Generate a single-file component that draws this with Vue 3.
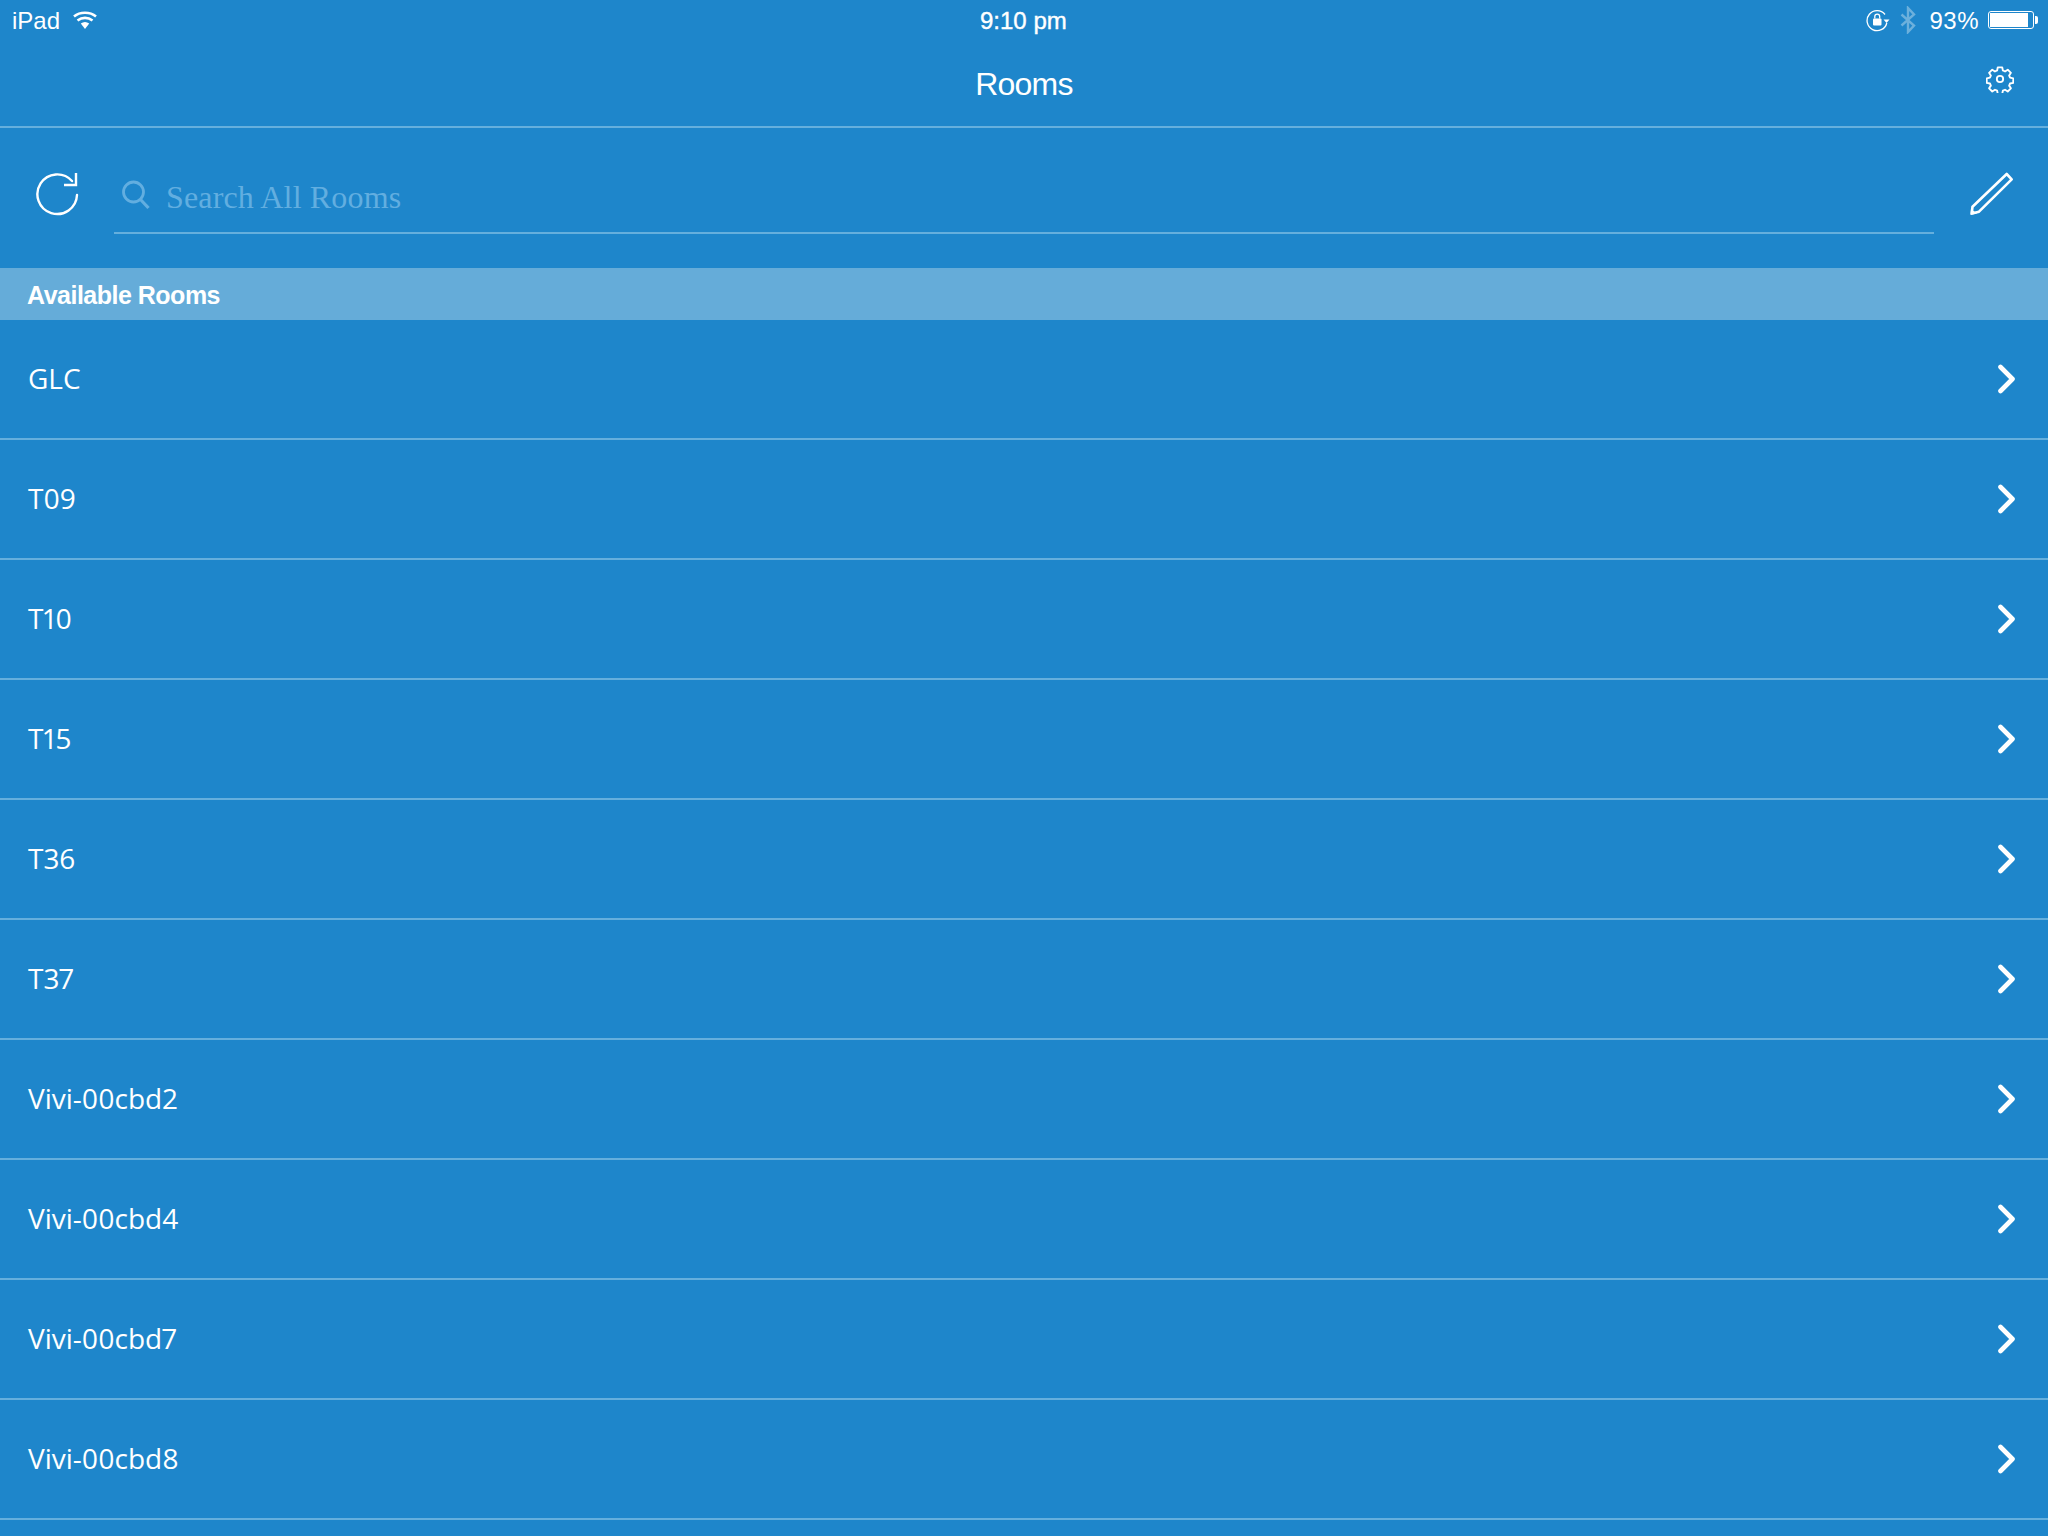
<script setup>
const rooms = ["GLC", "T09", "T10", "T15", "T36", "T37", "Vivi-00cbd2", "Vivi-00cbd4", "Vivi-00cbd7", "Vivi-00cbd8", ""];
</script>

<template>
  <div class="page">
    <!--status bar-->
    <div class="status">
      <div class="status-left">
        <span class="device">iPad</span>
        <svg width="24" height="18" viewBox="0 0 24 18">
          <path d="M1 5.500C7 .5 17 .5 23 5.500" fill="none" stroke="#fff" stroke-width="2.600" />
          <path d="M4.500 9.500C9 6 15 6 19.500 9.500" fill="none" stroke="#fff" stroke-width="2.600" />
          <path d="M7.800 12.500C10.500 10.500 13.500 10.500 16.200 12.500L12 18Z" fill="#fff" />
        </svg>
      </div>
      <div class="clock">9:10 pm</div>
      <div class="status-right">
        <svg width="24" height="24" viewBox="0 0 24 24">
          <path d="M19 6.500A10 10 0 1 0 20.800 15" fill="none" stroke="#fff" stroke-width="1.300" />
          <path d="M17.500 11.500h6l-3 3.500Z" fill="#fff" />
          <rect x="7" y="10.500" width="8.500" height="7" rx="1" fill="#fff" />
          <path d="M8.800 10.500V8.500a2.450 2.450 0 0 1 4.900 0v2" fill="none" stroke="#fff" stroke-width="1.300" />
        </svg>
        <svg class="bt" width="18" height="28" viewBox="0 0 18 28">
          <path d="M2.500 8.500L15 19.500L9 26V2L15 8.500L2.500 19.500" fill="none" stroke="#6cb0dc" stroke-width="2.400" />
        </svg>
        <span class="pct">93%</span>
        <div class="battery"><div class="charge"></div></div>
        <div class="nub"></div>
      </div>
    </div>

    <!--title-->
    <div class="nav">
      <span class="title">Rooms</span>
      <svg class="gear" width="28" height="28" viewBox="0 0 30 30">
        <path d="M12.600 2.500h4.800l.7 3.400 2.300 1 2.900-1.900 3.400 3.400-1.900 2.900 1 2.300 3.400.7v4.800l-3.400.7-1 2.300 1.900 2.900-3.400 3.400-2.900-1.900-2.300 1-.7 3.400h-4.800l-.7-3.400-2.300-1-2.900 1.900-3.400-3.400 1.900-2.900-1-2.300-3.400-.7v-4.800l3.400-.7 1-2.300-1.900-2.900 3.400-3.400 2.900 1.900 2.300-1Z" fill="none" stroke="#fff" stroke-width="2" stroke-linejoin="round" />
        <circle cx="15" cy="15" r="3.400" fill="none" stroke="#fff" stroke-width="2" />
      </svg>
    </div>

    <!--search-->
    <div class="search-row">
      <svg class="refresh" width="44" height="44" viewBox="0 0 44 44">
        <path d="M37 9A19.800 19.800 0 1 0 42 23" fill="none" stroke="#fff" stroke-width="2.400" stroke-linecap="round" />
        <path d="M41 1V13H29" fill="none" stroke="#fff" stroke-width="2.400" />
      </svg>
      <div class="search">
        <svg width="30" height="30" viewBox="0 0 30 30">
          <circle cx="12.500" cy="12" r="10" fill="none" stroke="#62aee0" stroke-width="2.800" />
          <path d="M19.500 19.500L27.500 28" fill="none" stroke="#62aee0" stroke-width="3.200" />
        </svg>
        <span class="placeholder">Search All Rooms</span>
      </div>
      <svg class="pencil" width="44" height="44" viewBox="0 0 44 44">
        <path d="M36.700 2L41.700 7.300L9 39.700L1.700 41.500L2.500 34.700Z" fill="none" stroke="#fff" stroke-width="2.600" stroke-linejoin="round" />
        <path d="M1 37L.5 43L7 41.500Z" fill="#fff" />
      </svg>
    </div>

    <div class="section">Available Rooms</div>

    <!--rooms-->
    <div v-for="room in rooms" :key="room" class="room">
      <span>{{ room }}</span>
      <svg v-if="room" width="18" height="30" viewBox="0 0 18 30">
        <path d="M2.500 3L14.500 15L2.500 27" fill="none" stroke="#fff" stroke-width="4.600" stroke-linecap="round" stroke-linejoin="round" />
      </svg>
    </div>
  </div>
</template>

<style scoped>
.page {
  width: 2048px;
  height: 1536px;
  overflow: hidden;
  background-color: #1e86cb;
  color: #fff;
  font-family: "Liberation Sans", Arial, sans-serif;
}

.status {
  height: 40px;
  display: flex;
  align-items: center;
  justify-content: space-between;
  padding: 0 10px 0 12px;
  font-size: 24px;
  position: relative;
}

.status-left {
  display: flex;
  align-items: center;
  gap: 13px;
}

.device {
  padding-top: 2px;
}

.clock {
  position: absolute;
  left: 980px;
  top: 7px;
  font-size: 24px;
  -webkit-text-stroke: 0.4px #fff;
}

.status-right {
  display: flex;
  align-items: center;
}

.bt {
  margin: 0 12px 0 9px;
}

.pct {
  margin-right: 9px;
  letter-spacing: 0.5px;
  padding-top: 2px;
}

.battery {
  width: 46px;
  height: 18px;
  box-sizing: border-box;
  border: 1px solid #fff;
  border-radius: 3px;
  padding: 1px;
}

.charge {
  width: 38px;
  height: 100%;
  background-color: #fff;
}

.nub {
  width: 3px;
  height: 8px;
  background-color: #fff;
  border-radius: 0 2px 2px 0;
  margin-left: 1px;
}

.nav {
  height: 88px;
  box-sizing: border-box;
  border-bottom: 2px solid #65afdd;
  display: flex;
  align-items: center;
  justify-content: center;
  position: relative;
}

.title {
  font-size: 32px;
  padding-top: 2px;
  letter-spacing: -0.8px;
}

.gear {
  position: absolute;
  right: 34px;
  top: 25px;
}

.search-row {
  height: 140px;
  box-sizing: border-box;
  padding: 38px 34px 34px 35px;
  display: flex;
  align-items: flex-start;
}

.refresh {
  margin-top: 6px;
  margin-right: 35px;
  flex-shrink: 0;
}

.search {
  flex: 1;
  height: 68px;
  box-sizing: border-box;
  border-bottom: 2px solid #65afdd;
  display: flex;
  align-items: flex-start;
  padding: 0 0 0 7px;
  gap: 15px;
}

.search svg {
  margin-top: 14px;
}

.placeholder {
  font-family: "Liberation Serif", "Times New Roman", serif;
  font-size: 32px;
  letter-spacing: 0.15px;
  color: #62aee0;
  margin-top: 13px;
}

.pencil {
  margin-left: 36px;
  margin-top: 6px;
  flex-shrink: 0;
}

.section {
  height: 52px;
  box-sizing: border-box;
  background-color: #65acd9;
  display: flex;
  align-items: center;
  padding: 2px 0 0 27px;
  font-size: 25px;
  font-weight: 700;
  letter-spacing: -0.5px;
}

.room {
  height: 120px;
  flex-shrink: 0;
  box-sizing: border-box;
  border-bottom: 2px solid #65afdd;
  display: flex;
  align-items: center;
  justify-content: space-between;
  padding: 0 32px 2px 28px;
  font-family: "Open Sans", sans-serif;
  font-size: 28px;
  font-weight: 400;
  font-variant-numeric: proportional-nums;
}

.room svg {
  margin-top: 2px;
}
</style>
